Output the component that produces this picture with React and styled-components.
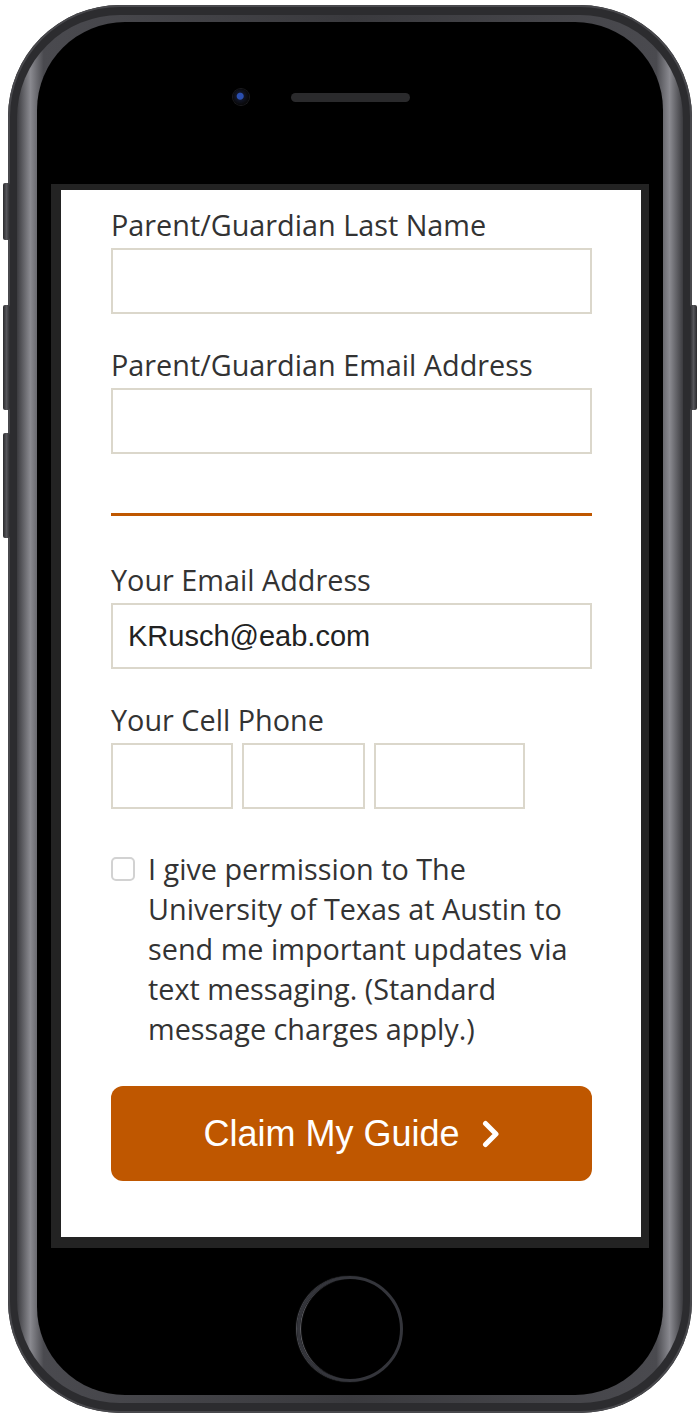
import styled, { createGlobalStyle } from "styled-components";

const GlobalStyle = createGlobalStyle`
  html, body {
    margin: 0;
    padding: 0;
    background: #ffffff;
  }
  * {
    box-sizing: border-box;
  }
`;

const Page = styled.div`
  width: 700px;
  height: 1416px;
  padding: 5px 8px 3px;
  background: #ffffff;
`;

const Shell = styled.div`
  position: relative;
  width: 684px;
  height: 1408px;
  border-radius: 112px;
  background: #2c2c2f;
  padding: 10px 9px;
  box-shadow: inset 0 0 0 2px #48484c;
`;

const SideButton = styled.div`
  position: absolute;
  top: ${(p) => p.$top}px;
  ${(p) => (p.$right ? "right: -5px;" : "left: -5px;")}
  width: 7px;
  height: ${(p) => p.$h}px;
  border-radius: 2px;
  background: linear-gradient(90deg, #2a2a2d, #55555a, #2a2a2d);
`;

const Rim = styled.div`
  height: 100%;
  border-radius: 103px;
  padding: 7px 20px 8px;
  background: linear-gradient(
    90deg,
    #3b3b3f 0%,
    #8a8a90 2%,
    #4a4a4f 4%,
    #3a3a3e 50%,
    #4a4a4f 96%,
    #8a8a90 98%,
    #3b3b3f 100%
  );
`;

const Face = styled.div`
  height: 100%;
  border-radius: 88px;
  background: #000000;
  display: flex;
  flex-direction: column;
  overflow: hidden;
`;

const TopBezel = styled.div`
  height: 162px;
  display: flex;
  align-items: center;
  gap: 42px;
  padding: 0 0 12px 196px;
`;

const Camera = styled.div`
  width: 16px;
  height: 16px;
  border-radius: 50%;
  background: radial-gradient(circle at 45% 45%, #2b4fb0 0 3px, #111526 4px, #0a0a0d 8px);
  box-shadow: 0 0 0 1px #1b1b1f;
`;

const Speaker = styled.div`
  width: 119px;
  height: 9px;
  border-radius: 5px;
  background: #2a2a2c;
`;

const ScreenFrame = styled.div`
  margin: 0 14px;
  background: #232323;
  padding: 6px 8px 11px 10px;
`;

const Screen = styled.div`
  height: 1047px;
  background: #ffffff;
  overflow: hidden;
`;

const Form = styled.form`
  display: flex;
  flex-direction: column;
  padding: 17px 49px 0 50px;
  font-family: "Open Sans", "Noto Sans", sans-serif;
  color: #333333;
`;

const Field = styled.div`
  display: flex;
  flex-direction: column;
  margin-bottom: ${(p) => (p.$last ? 0 : 33)}px;
`;

const Label = styled.label`
  font-size: 28.8px;
  line-height: 36px;
  margin-bottom: 5px;
  color: #333333;
`;

const Input = styled.input`
  height: 66px;
  width: ${(p) => p.$w || "100%"};
  border: 2px solid #dbd7cb;
  border-radius: 0;
  padding: 0 15px;
  font-family: "Liberation Sans", Arial, sans-serif;
  font-size: 29px;
  color: #222222;
  background: #ffffff;
  outline: none;
`;

const PhoneRow = styled.div`
  display: flex;
  gap: 9px;
`;

const Divider = styled.hr`
  margin: 59px 0 46px;
  border: none;
  height: 3px;
  background: #bf5700;
`;

const CheckRow = styled.label`
  display: flex;
  align-items: flex-start;
  gap: 13px;
  margin-top: 7px;
`;

const Box = styled.span`
  flex: none;
  width: 24px;
  height: 24px;
  margin-top: 8px;
  border: 2px solid #d2d2d2;
  border-radius: 5px;
  background: #ffffff;
`;

const CheckText = styled.span`
  font-size: 28.8px;
  line-height: 40px;
  color: #333333;
`;

const Submit = styled.button`
  margin-top: 37px;
  height: 95px;
  border: none;
  border-radius: 12px;
  background: #bf5700;
  color: #ffffff;
  font-family: "Liberation Sans", Arial, sans-serif;
  font-size: 36px;
  display: flex;
  align-items: center;
  justify-content: center;
  gap: 22px;
  cursor: pointer;
`;

const BottomBezel = styled.div`
  flex: 1;
  display: flex;
  justify-content: center;
  padding-top: 28px;
`;

const HomeButton = styled.div`
  width: 106px;
  height: 106px;
  border-radius: 50%;
  border: 3px solid #34353b;
  box-shadow: inset 2px 0 1px -1px #6a6a70, -1px 0 1px #55565c;
`;

const Chevron = () => (
  <svg width="18" height="28" viewBox="0 0 18 28">
    <path d="M3.5 3.5 L14 14 L3.5 24.5" fill="none" stroke="#ffffff" strokeWidth="5" strokeLinecap="round" strokeLinejoin="round" />
  </svg>
);

export default function App() {
  return (
    <Page>
      <GlobalStyle />
      <Shell>
        <SideButton $top={178} $h={57} />
        <SideButton $top={300} $h={105} />
        <SideButton $top={428} $h={105} />
        <SideButton $right $top={300} $h={105} />
        <Rim>
          <Face>
            <TopBezel>
              <Camera />
              <Speaker />
            </TopBezel>
            <ScreenFrame>
              <Screen>
                <Form onSubmit={(e) => e.preventDefault()}>
                  <Field>
                    <Label>Parent/Guardian Last Name</Label>
                    <Input />
                  </Field>
                  <Field $last>
                    <Label>Parent/Guardian Email Address</Label>
                    <Input />
                  </Field>
                  <Divider />
                  <Field>
                    <Label>Your Email Address</Label>
                    <Input defaultValue="KRusch@eab.com" />
                  </Field>
                  <Field>
                    <Label>Your Cell Phone</Label>
                    <PhoneRow>
                      <Input $w="122px" />
                      <Input $w="123px" />
                      <Input $w="151px" />
                    </PhoneRow>
                  </Field>
                  <CheckRow>
                    <Box />
                    <CheckText>
                      I give permission to The University of Texas at Austin to
                      send me important updates via text messaging. (Standard
                      message charges apply.)
                    </CheckText>
                  </CheckRow>
                  <Submit type="submit">
                    Claim My Guide
                    <Chevron />
                  </Submit>
                </Form>
              </Screen>
            </ScreenFrame>
            <BottomBezel>
              <HomeButton />
            </BottomBezel>
          </Face>
        </Rim>
      </Shell>
    </Page>
  );
}
